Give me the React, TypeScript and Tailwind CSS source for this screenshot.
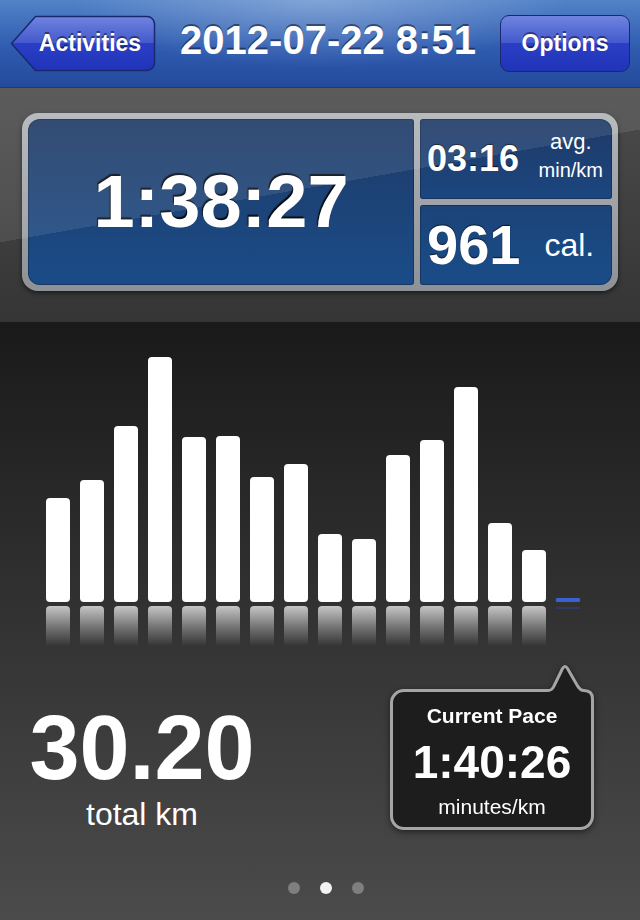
import React from 'react';

const splits = [104, 122, 176, 245, 165, 166, 125, 138, 68, 63, 147, 162, 215, 79, 52];

const BackButton = ({ label }: { label: string }) => (
  <div className="relative w-[146px] h-[57px] flex items-center justify-center pl-[14px]">
    <svg className="absolute inset-0" width="146" height="57" viewBox="0 0 146 57">
      <defs>
        <linearGradient id="navbtn" x1="0" y1="0" x2="0" y2="1">
          <stop offset="0" stopColor="#7084de" />
          <stop offset="0.49" stopColor="#4359cd" />
          <stop offset="0.5" stopColor="#2a3fc6" />
          <stop offset="1" stopColor="#2034b8" />
        </linearGradient>
      </defs>
      <path
        d="M25.5 1.5 H137 A7.5 7.5 0 0 1 144.5 9 V48 A7.5 7.5 0 0 1 137 55.5 H25.5 L1.5 28.5 Z"
        fill="url(#navbtn)"
        stroke="#19286f"
        strokeWidth="1.5"
        strokeLinejoin="round"
      />
    </svg>
    <span className="relative text-[23px] font-bold leading-none [text-shadow:0_-2px_0_rgba(0,0,0,0.45)]">{label}</span>
  </div>
);

const Header = () => (
  <div className="h-[88px] shrink-0 flex items-center px-[10px] border-b border-[#1c3a7a] bg-[radial-gradient(ellipse_at_50%_0%,rgba(255,255,255,0.28),transparent_55%),linear-gradient(#5282c8,#2f5cb0_55%,#23499c)]">
    <BackButton label="Activities" />
    <div className="flex-1 text-center">
      <span className="inline-block mb-[8px] text-[40px] font-bold leading-none [text-shadow:0_-2px_0_rgba(0,0,0,0.45)]">
        2012-07-22 8:51
      </span>
    </div>
    <div className="w-[130px] h-[57px] flex items-center justify-center rounded-[9px] border-[1.5px] border-[#19286f] bg-[linear-gradient(#7084de,#4359cd_49%,#2a3fc6_50%,#2034b8)]">
      <span className="text-[23px] font-bold leading-none [text-shadow:0_-2px_0_rgba(0,0,0,0.45)]">Options</span>
    </div>
  </div>
);

const StatsBand = () => (
  <div className="relative h-[234px] shrink-0 px-[22px] pt-[25px] bg-[linear-gradient(#4c4c4c,#353535)]">
    <div className="w-[596px] h-[178px] p-[6px] rounded-[16px] grid grid-cols-[386px_192px] grid-rows-[80px_80px] gap-[6px] bg-[linear-gradient(#b0b4b8,#8e9296)] shadow-[0_2px_5px_rgba(0,0,0,0.55)]">
      <div className="row-span-2 rounded-l-[12px] rounded-r-[3px] flex items-center justify-center bg-[linear-gradient(#1f3a66,#1a4c88)] shadow-[inset_0_0_0_1px_rgba(0,0,0,0.25)]">
        <span className="text-[74px] font-bold leading-none [text-shadow:-1px_-2px_1px_rgba(0,0,0,0.85)]">1:38:27</span>
      </div>
      <div className="rounded-[3px] rounded-tr-[12px] flex items-center justify-between pl-[7px] pr-[9px] bg-[linear-gradient(#1f3a66,#1b4680)] shadow-[inset_0_0_0_1px_rgba(0,0,0,0.25)]">
        <span className="text-[36px] font-bold leading-none [text-shadow:0_-1px_1px_rgba(0,0,0,0.7)]">03:16</span>
        <div className="flex flex-col items-center gap-[7px] mb-[7px] leading-none">
          <span className="text-[22px]">avg.</span>
          <span className="text-[20px]">min/km</span>
        </div>
      </div>
      <div className="rounded-[3px] rounded-br-[12px] flex items-center pl-[7px] bg-[linear-gradient(#1b4479,#1a4c88)] shadow-[inset_0_0_0_1px_rgba(0,0,0,0.25)]">
        <span className="text-[56px] font-bold leading-none [text-shadow:0_-1px_1px_rgba(0,0,0,0.7)]">961</span>
        <span className="ml-[24px] text-[32px] leading-none">cal.</span>
      </div>
    </div>
    <div className="absolute inset-0 pointer-events-none bg-[linear-gradient(170deg,rgba(255,255,255,0.09)_44.5%,transparent_44.5%)]" />
  </div>
);

const PaceBubble = () => (
  <div className="relative w-[204px] pt-[24px] drop-shadow-[0_2px_3px_rgba(0,0,0,0.5)]">
    <div className="h-[141px] rounded-[14px] border-[3px] border-[#a5a5a5] bg-[#1d1d1d] flex flex-col items-center pt-[13px] leading-none">
      <span className="text-[21px] font-bold">Current Pace</span>
      <span className="mt-[13px] text-[46px] font-bold">1:40:26</span>
      <span className="mt-[11px] text-[21px]">minutes/km</span>
    </div>
    <svg className="absolute top-0 left-[150px]" width="54" height="44" viewBox="0 0 54 44">
      <path
        d="M0 25.5 H8 Q12 25.5 14 21 L22.5 3.5 Q25 -0.5 27.5 3.5 L37 20 Q40 25.5 44 25.5 Q52.5 25.5 52.5 34 V44 H0 Z"
        fill="#1d1d1d"
      />
      <path
        d="M0 25.5 H8 Q12 25.5 14 21 L22.5 3.5 Q25 -0.5 27.5 3.5 L37 20 Q40 25.5 44 25.5 Q52.5 25.5 52.5 34 V44"
        fill="none"
        stroke="#a5a5a5"
        strokeWidth="3"
        strokeLinejoin="round"
      />
    </svg>
  </div>
);

export default function App() {
  return (
    <div className="w-[640px] h-[920px] overflow-hidden flex flex-col text-white font-['Liberation_Sans',Arial,sans-serif]">
      <Header />
      <StatsBand />
      <div className="flex-1 flex flex-col bg-[linear-gradient(#1a1a1a,#4b4b4b)]">
        <div className="mt-[20px] h-[260px] flex items-end gap-[10px] pl-[46px]">
          {splits.map((h, i) => (
            <div key={i} className="w-[24px] rounded-[4px] bg-white" style={{ height: h }} />
          ))}
          <div className="w-[24px] h-[4px] rounded-[1px] bg-[#3b60d0]" />
        </div>
        <div className="mt-[4px] h-[40px] flex gap-[10px] pl-[46px]">
          {splits.map((_, i) => (
            <div
              key={i}
              className="w-[24px] h-[40px] rounded-t-[4px] bg-[linear-gradient(rgba(255,255,255,0.72),rgba(255,255,255,0.3)_55%,rgba(255,255,255,0))]"
            />
          ))}
          <div className="w-[24px] pt-[1px]">
            <div className="h-[2px] bg-[#2b3f7a] opacity-70" />
          </div>
        </div>

        <div className="mt-[19px] flex items-start">
          <div className="w-[284px] mt-[38px] flex flex-col items-center leading-none">
            <span className="text-[90px] font-bold">30.20</span>
            <span className="mt-[5px] text-[32px]">total km</span>
          </div>
          <div className="ml-[106px]">
            <PaceBubble />
          </div>
        </div>

        <div className="mt-[52px] pl-[11px] flex justify-center gap-[20px]">
          <div className="w-[12px] h-[12px] rounded-full bg-[#7f7f7f]" />
          <div className="w-[12px] h-[12px] rounded-full bg-[#f2f2f2]" />
          <div className="w-[12px] h-[12px] rounded-full bg-[#7f7f7f]" />
        </div>
      </div>
    </div>
  );
}
